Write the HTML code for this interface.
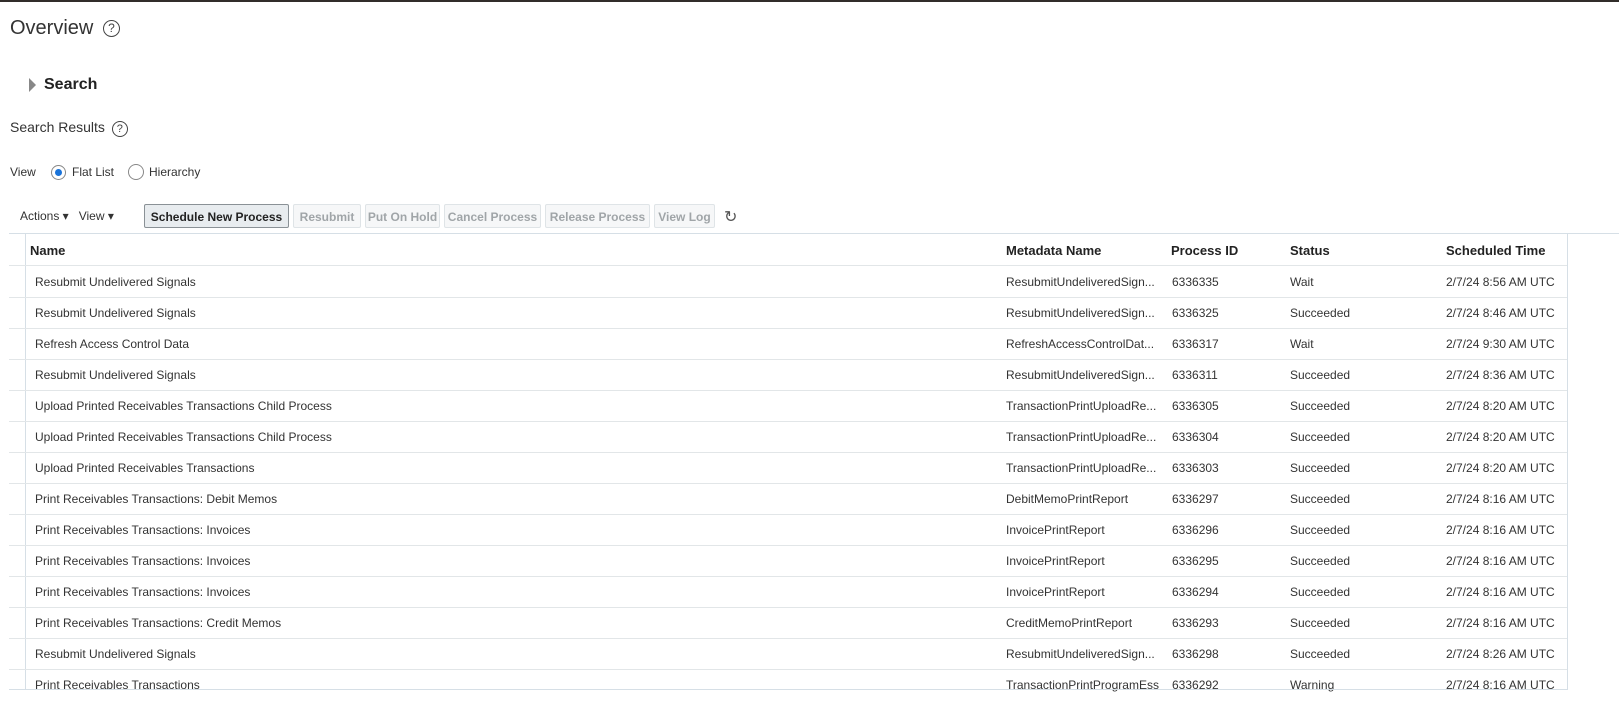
<!DOCTYPE html>
<html><head><style>
body{margin:0;width:1619px;height:722px;overflow:hidden;background:#fff;font-family:"Liberation Sans",sans-serif;color:#333;position:relative}
.a{position:absolute;white-space:nowrap}
.q{display:inline-block;border:1.3px solid #444;border-radius:50%;text-align:center;color:#444}
.btn{position:absolute;top:204px;height:24px;border:1px solid #dfe4e7;background:#f6f7f8;color:#a0a5a8;font-size:12px;font-weight:bold;line-height:24px;text-align:center;box-sizing:border-box;border-radius:2px}
.row{position:absolute;left:9px;width:1558px;height:31px;border-bottom:1px solid #e2e6e8;font-size:12px;color:#333}
.row span{position:absolute;top:9px;white-space:nowrap}
</style></head><body>
<div class="a" style="left:0;top:0;width:1619px;height:2px;background:#312d2a"></div>
<div class="a" style="left:10px;top:17px;font-size:20px;color:#333">Overview <span class="q" style="width:15px;height:15px;font-size:12px;line-height:15px;margin-left:4px;vertical-align:2px">?</span></div>
<div class="a" style="left:29px;top:78px;width:0;height:0;border-left:7px solid #888;border-top:7px solid transparent;border-bottom:7px solid transparent"></div>
<div class="a" style="left:44px;top:76px;font-size:16px;font-weight:bold;color:#222">Search</div>
<div class="a" style="left:10px;top:119px;font-size:14px;color:#333">Search Results <span class="q" style="width:14px;height:14px;font-size:11px;line-height:14px;margin-left:3px">?</span></div>
<div class="a" style="left:10px;top:165px;font-size:12px">View</div>
<div class="a" style="left:51px;top:165px;width:13px;height:13px;border:1px solid #888;border-radius:50%"></div>
<div class="a" style="left:55px;top:169px;width:7px;height:7px;background:#1a73d9;border-radius:50%"></div>
<div class="a" style="left:72px;top:165px;font-size:12px">Flat List</div>
<div class="a" style="left:128px;top:164px;width:14px;height:14px;border:1px solid #888;border-radius:50%"></div>
<div class="a" style="left:149px;top:165px;font-size:12px">Hierarchy</div>
<div class="a" style="left:20px;top:209px;font-size:12px">Actions ▾&nbsp;&nbsp;&nbsp;View ▾</div>
<div class="btn" style="left:144px;width:145px;border-color:#8a9196;background:#e8ecef;color:#222">Schedule New Process</div>
<div class="btn" style="left:293px;width:68px">Resubmit</div>
<div class="btn" style="left:365px;width:75px">Put On Hold</div>
<div class="btn" style="left:444px;width:97px">Cancel Process</div>
<div class="btn" style="left:545px;width:105px">Release Process</div>
<div class="btn" style="left:654px;width:61px">View Log</div>
<div class="a" style="left:724px;top:207px;font-size:16px;color:#555">↻</div>
<div class="a" style="left:9px;top:233px;width:1610px;height:1px;background:#d6dfe6"></div>
<div class="a" style="left:25px;top:234px;width:1px;height:456px;background:#d6dfe6"></div>
<div class="a" style="left:1567px;top:234px;width:1px;height:456px;background:#d6dfe6"></div>
<div class="row" style="top:234px;font-weight:bold;font-size:13px;color:#222"><span style="left:21px">Name</span><span style="left:997px">Metadata Name</span><span style="left:1162px">Process ID</span><span style="left:1281px">Status</span><span style="left:1437px">Scheduled Time</span></div>
<div id="rows"></div>
<div class="a" style="left:9px;top:689px;width:1558px;height:1px;background:#d6dfe6"></div>
<script>
var d=[["Resubmit Undelivered Signals","ResubmitUndeliveredSign...","6336335","Wait","2/7/24 8:56 AM UTC"],
["Resubmit Undelivered Signals","ResubmitUndeliveredSign...","6336325","Succeeded","2/7/24 8:46 AM UTC"],
["Refresh Access Control Data","RefreshAccessControlDat...","6336317","Wait","2/7/24 9:30 AM UTC"],
["Resubmit Undelivered Signals","ResubmitUndeliveredSign...","6336311","Succeeded","2/7/24 8:36 AM UTC"],
["Upload Printed Receivables Transactions Child Process","TransactionPrintUploadRe...","6336305","Succeeded","2/7/24 8:20 AM UTC"],
["Upload Printed Receivables Transactions Child Process","TransactionPrintUploadRe...","6336304","Succeeded","2/7/24 8:20 AM UTC"],
["Upload Printed Receivables Transactions","TransactionPrintUploadRe...","6336303","Succeeded","2/7/24 8:20 AM UTC"],
["Print Receivables Transactions: Debit Memos","DebitMemoPrintReport","6336297","Succeeded","2/7/24 8:16 AM UTC"],
["Print Receivables Transactions: Invoices","InvoicePrintReport","6336296","Succeeded","2/7/24 8:16 AM UTC"],
["Print Receivables Transactions: Invoices","InvoicePrintReport","6336295","Succeeded","2/7/24 8:16 AM UTC"],
["Print Receivables Transactions: Invoices","InvoicePrintReport","6336294","Succeeded","2/7/24 8:16 AM UTC"],
["Print Receivables Transactions: Credit Memos","CreditMemoPrintReport","6336293","Succeeded","2/7/24 8:16 AM UTC"],
["Resubmit Undelivered Signals","ResubmitUndeliveredSign...","6336298","Succeeded","2/7/24 8:26 AM UTC"],
["Print Receivables Transactions","TransactionPrintProgramEss","6336292","Warning","2/7/24 8:16 AM UTC"]];
var h="";d.forEach(function(r,i){var t=266+i*31;h+='<div class="row" style="top:'+t+'px;'+(i==13?'height:23px;overflow:hidden;border:0':'')+'"><span style="left:26px">'+r[0]+'</span><span style="left:997px">'+r[1]+'</span><span style="left:1163px">'+r[2]+'</span><span style="left:1281px">'+r[3]+'</span><span style="left:1437px">'+r[4]+'</span></div>';});
document.getElementById("rows").innerHTML=h;
</script>
</body></html>
